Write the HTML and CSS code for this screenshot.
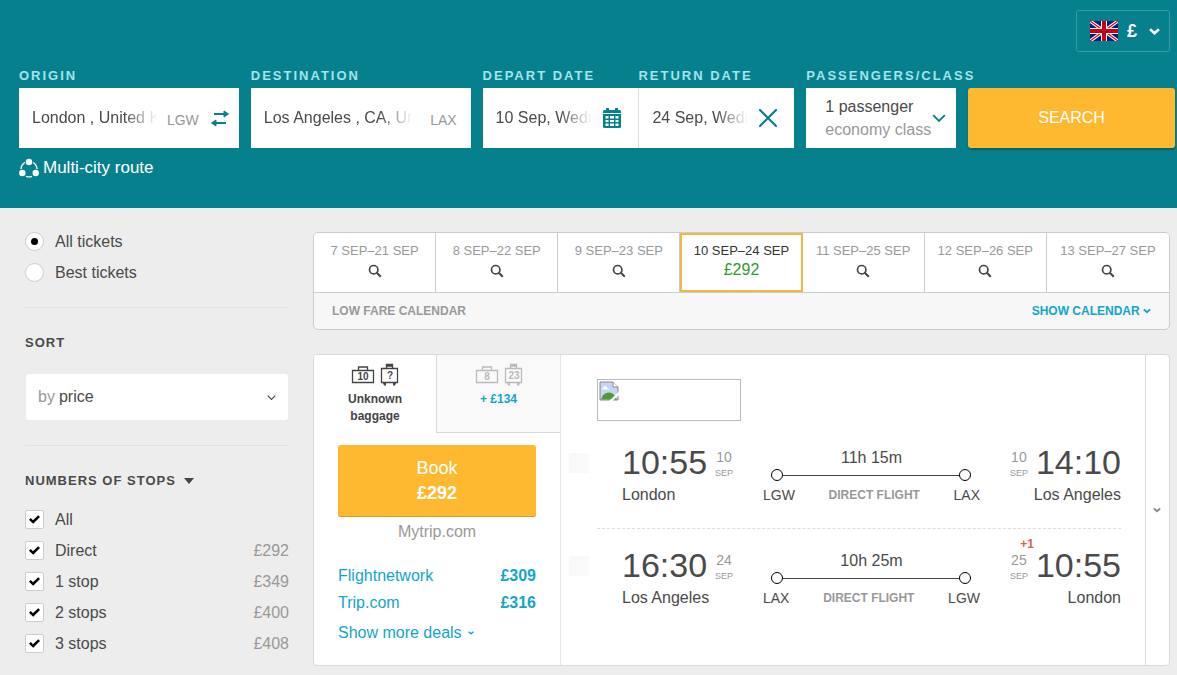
FILE: index.html
```html
<!DOCTYPE html>
<html lang="en">

<head>
    <meta charset="utf-8">
    <title>London - Los Angeles flights</title>
    <meta name="viewport" content="width=device-width, initial-scale=1.0">
    <link rel="stylesheet" href="styles.css">
</head>

<body>
    <!-- shared icons -->
    <svg class="sprite" aria-hidden="true">
        <symbol id="chevron" viewBox="0 0 12 12">
            <path d="M1 3.5l5 5 5-5" fill="none" stroke="currentColor" stroke-width="1.6" />
        </symbol>
        <symbol id="chevron-bold" viewBox="0 0 10 10">
            <path d="M1 3l4 3.5L9 3" fill="none" stroke="currentColor" stroke-width="2.4" />
        </symbol>
        <symbol id="search" viewBox="0 0 14 14">
            <circle cx="5.7" cy="5.7" r="4.2" fill="none" stroke="currentColor" stroke-width="1.7" />
            <path d="M8.8 8.8l4 4" stroke="currentColor" stroke-width="2" />
        </symbol>
        <symbol id="bag" viewBox="0 0 24 24">
            <path d="M1.5 7.5h21v12h-21zM7.5 7.5v-3.5h9v3.5" fill="none" stroke="currentColor" stroke-width="1.3" />
        </symbol>
        <symbol id="suitcase" viewBox="0 0 19 24">
            <path d="M1.5 5.5h16v14h-16zM6.5 5.5v-4h6v4M6.5 3h6" fill="none" stroke="currentColor" stroke-width="1.3" />
            <path d="M3 20h3v2.5h-2zM13 20h3l-1 2.5h-2z" fill="currentColor" />
        </symbol>
    </svg>

    <header class="top">
        <div class="currency">
            <svg class="flag" viewBox="0 0 28 20" width="28" height="20" aria-hidden="true">
                <path d="M0 0h28v20H0z" fill="#0a1a6e" />
                <path d="M0 0l28 20M28 0L0 20" stroke="#fff" stroke-width="3.4" />
                <path d="M0 0l28 20M28 0L0 20" stroke="#d0021b" stroke-width="1.2" />
                <path d="M14 0v20M0 10h28" stroke="#fff" stroke-width="6" />
                <path d="M14 0v20M0 10h28" stroke="#c8000f" stroke-width="4" />
            </svg>
            <select aria-label="Currency">
                <option>£</option>
            </select>
            <svg class="icon" width="11" height="11"><use href="#chevron-bold" /></svg>
        </div>

        <form class="search" onsubmit="return false;">
            <div class="field">
                <label for="origin">ORIGIN</label>
                <div class="box">
                    <input type="text" id="origin" value="London , United Kingdom">
                    <span class="code">LGW</span>
                    <button type="button" class="box-btn" aria-label="Swap">
                        <svg width="20" height="18" viewBox="0 0 20 18">
                            <path d="M4 5h11M5 14h11" stroke="currentColor" stroke-width="2.2" />
                            <path d="M14 2l4.500 3-4.500 3zM6 11l-4.500 3L6 17z" fill="currentColor" stroke="currentColor" stroke-linejoin="round" />
                        </svg>
                    </button>
                </div>
            </div>
            <div class="field">
                <label for="destination">DESTINATION</label>
                <div class="box box-dest">
                    <input type="text" id="destination" value="Los Angeles , CA, United States">
                    <span class="code">LAX</span>
                </div>
            </div>
            <div class="dates">
                <div class="field">
                    <label for="depart">DEPART DATE</label>
                    <div class="box box-date">
                        <input type="text" id="depart" value="10 Sep, Wednesday">
                        <button type="button" class="box-btn" aria-label="Open calendar">
                            <svg width="18" height="20" viewBox="0 0 18 20">
                                <path d="M0 3.5q0-1.500 1.500-1.500H3V0h3v2h6V0h3v2h1.500Q18 2 18 3.500V5H0z" fill="currentColor" />
                                <path d="M0 6h18v12.500q0 1.500-1.500 1.500h-15Q0 20 0 18.500z" fill="currentColor" />
                                <path d="M2.500 8h3v2.500h-3zM7 8h4v2.500H7zM12.500 8h3v2.500h-3zM2.500 12h3v2h-3zM7 12h4v2H7zM12.500 12h3v2h-3zM2.500 15.500h3V18h-3zM7 15.500h4V18H7zM12.500 15.500h3V18h-3z" fill="#fff" />
                            </svg>
                        </button>
                    </div>
                </div>
                <div class="field">
                    <label for="return">RETURN DATE</label>
                    <div class="box box-date">
                        <input type="text" id="return" value="24 Sep, Wednesday">
                        <button type="button" class="box-btn" aria-label="Clear return date">
                            <svg width="18" height="18" viewBox="0 0 18 18">
                                <path d="M1 1l16 16M17 1L1 17" stroke="currentColor" stroke-width="2.2" stroke-linecap="round" />
                            </svg>
                        </button>
                    </div>
                </div>
            </div>
            <div class="field">
                <label for="passengers">PASSENGERS/CLASS</label>
                <button type="button" class="box passengers" id="passengers">
                    <span>1 passenger<br><small>economy class</small></span>
                    <svg class="icon" width="14" height="14"><use href="#chevron" /></svg>
                </button>
            </div>
            <button type="submit" class="search-btn">SEARCH</button>
        </form>

        <a href="#" class="multi">
            <svg width="20" height="20" viewBox="0 0 20 20" aria-hidden="true">
                <path d="M6 4.500A8 8 0 0 0 2 11M14 4.500A8 8 0 0 1 18 11M7 18.300a8 8 0 0 0 6 0" fill="none" stroke="currentColor" stroke-width="1.4" />
                <circle cx="10" cy="4" r="3.2" fill="currentColor" />
                <circle cx="3.3" cy="15" r="3.2" fill="currentColor" />
                <circle cx="16.7" cy="15" r="3.2" fill="currentColor" />
            </svg>
            Multi-city route
        </a>
    </header>

    <div class="page">
        <aside class="filters">
            <div class="group">
                <label class="row"><input type="radio" name="tickets" checked> All tickets</label>
                <label class="row"><input type="radio" name="tickets"> Best tickets</label>
            </div>

            <div class="group">
                <h3>SORT</h3>
                <div class="sort">
                    <label for="sort">by</label>
                    <select id="sort">
                        <option>price</option>
                        <option>duration</option>
                    </select>
                    <svg class="icon" width="9" height="9"><use href="#chevron" /></svg>
                </div>
            </div>

            <div class="group">
                <h3>NUMBERS OF STOPS <span class="arrow"></span></h3>
                <label class="row"><input type="checkbox" checked> All</label>
                <label class="row"><input type="checkbox" checked> Direct <span class="price">£292</span></label>
                <label class="row"><input type="checkbox" checked> 1 stop <span class="price">£349</span></label>
                <label class="row"><input type="checkbox" checked> 2 stops <span class="price">£400</span></label>
                <label class="row"><input type="checkbox" checked> 3 stops <span class="price">£408</span></label>
            </div>
        </aside>

        <main>
            <section class="calendar">
                <div class="days">
                    <button type="button">7 SEP–21 SEP<svg width="14" height="14"><use href="#search" /></svg></button>
                    <button type="button">8 SEP–22 SEP<svg width="14" height="14"><use href="#search" /></svg></button>
                    <button type="button">9 SEP–23 SEP<svg width="14" height="14"><use href="#search" /></svg></button>
                    <button type="button" class="active">10 SEP–24 SEP<b>£292</b></button>
                    <button type="button">11 SEP–25 SEP<svg width="14" height="14"><use href="#search" /></svg></button>
                    <button type="button">12 SEP–26 SEP<svg width="14" height="14"><use href="#search" /></svg></button>
                    <button type="button">13 SEP–27 SEP<svg width="14" height="14"><use href="#search" /></svg></button>
                </div>
                <div class="calendar-foot">
                    <span>LOW FARE CALENDAR</span>
                    <a href="#">SHOW CALENDAR <svg width="8" height="8"><use href="#chevron-bold" /></svg></a>
                </div>
            </section>

            <article class="ticket">
                <div class="offers">
                    <div class="tabs">
                        <button type="button" class="tab active">
                            <span class="bags">
                                <svg width="24" height="24"><use href="#bag" /><text x="12" y="17">10</text></svg>
                                <svg width="19" height="24"><use href="#suitcase" /><text x="10" y="16">?</text></svg>
                            </span>
                            Unknown<br>baggage
                        </button>
                        <button type="button" class="tab">
                            <span class="bags">
                                <svg width="24" height="24"><use href="#bag" /><text x="12" y="17">8</text></svg>
                                <svg width="19" height="24"><use href="#suitcase" /><text x="10" y="16">23</text></svg>
                            </span>
                            + £134
                        </button>
                    </div>
                    <div class="deals">
                        <button type="button" class="book">Book<b>£292</b></button>
                        <div class="agency">Mytrip.com</div>
                        <a href="#" class="deal">Flightnetwork <b>£309</b></a>
                        <a href="#" class="deal">Trip.com <b>£316</b></a>
                        <a href="#" class="more">Show more deals <svg width="6" height="6"><use href="#chevron-bold" /></svg></a>
                    </div>
                </div>

                <div class="flights">
                    <div class="logo">
                        <svg width="20" height="20" viewBox="0 0 20 20" aria-hidden="true">
                            <path d="M1 1h13l5 5v13H1z" fill="#c3d6f5" stroke="#8a8a8a" />
                            <path d="M14 1v5h5" fill="#fff" stroke="#8a8a8a" />
                            <path d="M4 7q0-2 2-2t2 2q2 0 2 1.500H3Q3 7 4 7z" fill="#fff" />
                            <path d="M2 18.500q2-7 8-7 5 0 8 7z" fill="#4f9c32" />
                            <path d="M10 20L20 10.500V14l-6.500 6z" fill="#fff" />
                        </svg>
                    </div>
                    <div class="leg">
                        <input type="checkbox" class="pin" aria-label="Pin outbound flight">
                        <div class="leg-body">
                            <div class="stop">
                                <div class="when"><time>10:55</time><span class="date">10<small>SEP</small></span></div>
                                <div>London</div>
                            </div>
                            <div class="route">
                                <div class="duration">11h 15m</div>
                                <div class="line"></div>
                                <div class="codes"><span>LGW</span><b>DIRECT FLIGHT</b><span>LAX</span></div>
                            </div>
                            <div class="stop arrive">
                                <div class="when"><span class="date">10<small>SEP</small></span><time>14:10</time></div>
                                <div>Los Angeles</div>
                            </div>
                        </div>
                    </div>
                    <div class="leg">
                        <input type="checkbox" class="pin" aria-label="Pin return flight">
                        <div class="leg-body">
                            <div class="stop">
                                <div class="when"><time>16:30</time><span class="date">24<small>SEP</small></span></div>
                                <div>Los Angeles</div>
                            </div>
                            <div class="route">
                                <div class="duration">10h 25m</div>
                                <div class="line"></div>
                                <div class="codes"><span>LAX</span><b>DIRECT FLIGHT</b><span>LGW</span></div>
                            </div>
                            <div class="stop arrive">
                                <div class="when"><span class="date"><em>+1</em>25<small>SEP</small></span><time>10:55</time></div>
                                <div>London</div>
                            </div>
                        </div>
                    </div>
                </div>

                <button type="button" class="expand" aria-label="Show details">
                    <svg width="8" height="8"><use href="#chevron-bold" /></svg>
                </button>
            </article>
        </main>
    </div>
</body>

</html>
```
FILE: styles.css
```css
* {
    box-sizing: border-box;
}

body {
    font-family: "Liberation Sans", Arial, sans-serif;
    font-size: 16px;
    line-height: 20px;
    margin: 0;
    color: #4a4a4a;
    background-color: #ededed;
}

button,
input,
select {
    font: inherit;
    color: inherit;
    margin: 0;
}

button,
select {
    padding: 0;
    border: none;
    background: none;
    cursor: pointer;
}

select {
    appearance: none;
    outline: none;
}

a {
    color: #12a5cb;
    text-decoration: none;
}

svg {
    flex: none;
}

.sprite {
    display: none;
}

.icon {
    pointer-events: none;
}

/* search header */

.top {
    display: flex;
    flex-direction: column;
    background-color: #07808d;
    padding: 10px 2px 28px 19px;
}

.currency {
    display: flex;
    align-items: center;
    align-self: flex-end;
    height: 42px;
    margin-right: 5px;
    padding: 0 9px 0 13px;
    border: 1px solid #3a9ba6;
    border-radius: 3px;
    color: #fff;
}

.currency select {
    width: 22px;
    margin: 0 0 0 9px;
    font-size: 18px;
    font-weight: bold;
}

.search {
    display: grid;
    grid-template-columns: 220fr 220fr 312fr 150fr 207fr;
    gap: 12px;
    align-items: end;
    margin-top: 12px;
}

.field {
    min-width: 0;
}

.field label {
    display: block;
    font-size: 13px;
    font-weight: bold;
    line-height: 24px;
    letter-spacing: 2px;
    color: #a3e3ec;
    white-space: nowrap;
}

.box {
    display: flex;
    align-items: center;
    width: 100%;
    height: 60px;
    padding: 0 9px 0 13px;
    background-color: #fff;
}

.box-dest {
    padding-right: 14px;
}

.box-date {
    padding-right: 17px;
}

.box input {
    flex: 1;
    min-width: 0;
    padding: 0;
    border: none;
    outline: none;
    background: none;
    -webkit-mask-image: linear-gradient(to right, #000 calc(100% - 32px), transparent);
    mask-image: linear-gradient(to right, #000 calc(100% - 32px), transparent);
}

.code {
    margin-left: 10px;
    padding-top: 4px;
    font-size: 14px;
    color: #999;
}

.box-dest .code {
    margin-left: 18px;
}

.box-btn {
    display: flex;
    margin-left: 11px;
    color: #07808d;
}

.dates {
    display: grid;
    grid-template-columns: 1fr 1fr;
}

.dates .field + .field .box {
    border-left: 1px solid #ddd;
}

.passengers {
    justify-content: space-between;
    padding: 0 10px 0 19px;
    line-height: 23px;
    text-align: left;
    white-space: nowrap;
}

.passengers small {
    font-size: 16px;
    color: #999;
}

.passengers .icon {
    color: #07808d;
}

.search-btn {
    height: 60px;
    border-radius: 3px;
    background-color: #ffb931;
    box-shadow: 0 2px 2px rgba(0, 0, 0, 0.25);
    color: #fff;
}

.multi {
    display: flex;
    align-items: center;
    align-self: flex-start;
    gap: 4px;
    margin-top: 8px;
    font-size: 17px;
    line-height: 24px;
    color: #fff;
}

.page {
    display: grid;
    grid-template-columns: 264px 1fr;
    gap: 24px;
    padding: 24px 7px 10px 25px;
}

/* filters */

.group {
    padding-bottom: 19px;
    border-bottom: 1px solid #e2e2e2;
}

.group:first-child {
    margin-top: -6px;
}

.group:last-child {
    border: none;
    padding: 0;
}

.filters h3 {
    display: flex;
    align-items: center;
    gap: 8px;
    margin: 25px 0 21px;
    font-size: 13px;
    line-height: 20px;
    letter-spacing: 1px;
}

.group:last-child h3 {
    margin-bottom: 13px;
}

.arrow {
    border: 5px solid transparent;
    border-top: 6px solid #444;
    border-bottom: none;
}

.row {
    display: flex;
    align-items: center;
    height: 31px;
    cursor: pointer;
}

.row input {
    appearance: none;
    display: grid;
    place-items: center;
    width: 19px;
    height: 19px;
    margin-right: 11px;
    border: 1px solid #ccc;
    border-radius: 2px;
    background-color: #fff;
}

.row input[type="radio"] {
    border-radius: 50%;
}

.row input[type="radio"]:checked::before {
    content: "";
    width: 7px;
    height: 7px;
    border-radius: 50%;
    background-color: #000;
}

.row input[type="checkbox"]:checked::before {
    content: "";
    width: 11px;
    height: 7px;
    background-color: #000;
    height: 10px;
    clip-path: polygon(0 52%, 16% 36%, 36% 58%, 84% 8%, 100% 24%, 38% 92%);
}

.price {
    margin-left: auto;
    color: #999;
}

.sort {
    display: flex;
    align-items: center;
    height: 46px;
    margin: 0 1px 6px;
    padding: 0 12px;
    border-radius: 3px;
    background-color: #fff;
}

.sort label {
    color: #999;
}

.sort select {
    flex: 1;
    padding-left: 4px;
}

/* fare calendar */

.calendar {
    border: 1px solid #ccc;
    border-radius: 5px;
    background-color: #f7f7f7;
    overflow: hidden;
}

.days {
    display: grid;
    grid-template-columns: repeat(7, 1fr);
    height: 60px;
    border-bottom: 1px solid #ccc;
    background-color: #fff;
}

.days button {
    display: flex;
    flex-direction: column;
    align-items: center;
    padding-top: 8px;
    border-right: 1px solid #ccc;
    font-size: 13px;
    color: #999;
    white-space: nowrap;
}

.days button:last-child {
    border-right: none;
}

.days svg {
    margin-top: 3px;
    color: #444;
}

.days .active {
    padding-top: 6px;
    border: 2px solid #f0b845;
    color: #333;
}

.days b {
    font-size: 16px;
    font-weight: normal;
    line-height: 18px;
    color: #2e9a2e;
}

.calendar-foot {
    display: flex;
    justify-content: space-between;
    padding: 8px 18px;
    font-size: 12px;
    font-weight: bold;
    color: #999;
}

/* ticket */

.ticket {
    display: grid;
    grid-template-columns: 247px 1fr 24px;
    margin-top: 24px;
    border: 1px solid #d9d9d9;
    border-radius: 4px;
    background-color: #fff;
    overflow: hidden;
}

.offers {
    border-right: 1px solid #e5e5e5;
}

.tabs {
    display: grid;
    grid-template-columns: 122px 1fr;
    height: 78px;
}

.tab {
    display: flex;
    flex-direction: column;
    align-items: center;
    padding-top: 8px;
    border: solid #d9d9d9;
    border-width: 0 0 1px 1px;
    background-color: #f9f9f9;
    font-size: 12px;
    font-weight: bold;
    line-height: 17px;
    color: #12a5cb;
}

.tab.active {
    border: none;
    background-color: #fff;
    color: #444;
}

.bags {
    display: flex;
    justify-content: center;
    gap: 5px;
    height: 28px;
    color: #bbb;
}

.active .bags {
    color: #444;
}

.bags text {
    font-size: 10px;
    fill: currentColor;
    text-anchor: middle;
}

.deals {
    padding: 12px 24px 20px;
}

.book {
    display: block;
    width: 100%;
    height: 72px;
    border-radius: 3px;
    background-color: #ffb931;
    box-shadow: inset 0 -1px 0 #d99c28;
    font-size: 18px;
    line-height: 25px;
    color: #fff;
}

.book b {
    display: block;
}

.agency {
    margin: 5px 0 20px;
    text-align: center;
    color: #999;
}

.deal {
    display: flex;
    justify-content: space-between;
    line-height: 27px;
}

.more {
    display: flex;
    align-items: center;
    gap: 6px;
    margin-top: 7px;
}

.flights {
    padding: 24px 24px 33px 8px;
}

.logo {
    width: 144px;
    height: 42px;
    margin: 0 0 5px 28px;
    padding: 1px;
    border: 1px solid #bbb;
}

.leg {
    display: flex;
    align-items: flex-start;
}

.pin {
    appearance: none;
    width: 20px;
    height: 20px;
    margin-top: 27px;
    background-color: #f9f9f9;
}

.leg-body {
    display: grid;
    grid-template-columns: 112px 1fr 112px;
    gap: 29px;
    flex: 1;
    margin-left: 8px;
    padding: 22px 0 23px 25px;
    border-bottom: 1px dashed #ddd;
}

.leg:last-child .leg-body {
    border-bottom-color: transparent;
}

.when {
    display: flex;
    gap: 8px;
    height: 28px;
    margin-bottom: 9px;
}

.when time {
    font-size: 34px;
    line-height: 28px;
}

.arrive {
    text-align: right;
}

.arrive .when {
    justify-content: flex-end;
}

.date {
    position: relative;
    font-size: 14px;
    line-height: 18px;
    text-align: center;
    color: #999;
}

.date small {
    display: block;
    font-size: 9px;
    line-height: 14px;
}

/* next day arrival mark */
.date em {
    position: absolute;
    top: -16px;
    right: -6px;
    font-size: 12px;
    font-style: normal;
    font-weight: bold;
    color: #e05a5a;
}

.duration {
    text-align: center;
}

.line {
    display: flex;
    align-items: center;
    justify-content: space-between;
    height: 14px;
    padding: 0 9px 0 8px;
    background: linear-gradient(#444, #444) center / calc(100% - 40px) 1px no-repeat;
}

.line::before,
.line::after {
    content: "";
    width: 10px;
    height: 10px;
    border: 1px solid #000;
    border-radius: 50%;
    background-color: #fff;
}

.codes {
    display: flex;
    align-items: center;
    justify-content: space-between;
    padding-top: 4px;
    font-size: 14px;
    line-height: 19px;
}

.codes b {
    font-size: 12px;
    color: #999;
}

.expand {
    display: flex;
    align-items: center;
    justify-content: center;
    padding-right: 2px;
    border-left: 1px solid #d9d9d9;
    color: #888;
}
```
